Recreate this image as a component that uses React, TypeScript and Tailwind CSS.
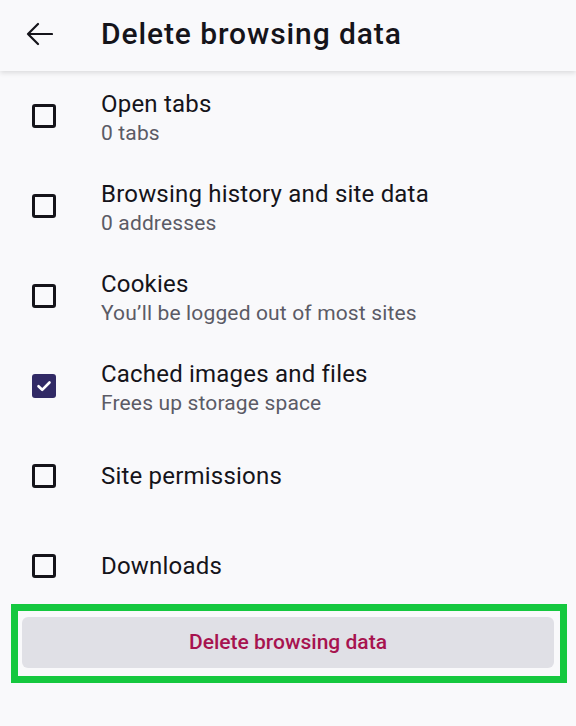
import React from "react";

const items = [
  { title: "Open tabs", sub: "0 tabs", checked: false },
  { title: "Browsing history and site data", sub: "0 addresses", checked: false },
  { title: "Cookies", sub: "You\u2019ll be logged out of most sites", checked: false },
  { title: "Cached images and files", sub: "Frees up storage space", checked: true },
  { title: "Site permissions", sub: "", checked: false },
  { title: "Downloads", sub: "", checked: false },
];

function Box({ checked }: { checked: boolean }) {
  if (checked) {
    return (
      <div className="w-[24px] h-[24px] rounded-[3px] bg-[#312a65] flex items-center justify-center">
        <svg width="18" height="18" viewBox="0 0 18 18" fill="none">
          <path d="M3.5 9.2 L7.2 12.8 L14.5 5.5" stroke="#ffffff" strokeWidth="2.6" strokeLinecap="round" strokeLinejoin="round" />
        </svg>
      </div>
    );
  }
  return <div className="w-[24px] h-[24px] rounded-[3px] border-[3px] border-[#15141a]" />;
}

export default function App() {
  return (
    <div
      className="w-[576px] h-[726px] bg-[#f9f9fb] flex flex-col overflow-hidden"
      style={{ fontFamily: "Roboto, 'Noto Sans', sans-serif" }}
    >
      <div className="h-[71px] shrink-0 flex items-center pb-[4px] bg-[#f9f9fb] shadow-[0_2px_5px_rgba(0,0,0,0.12)] relative z-10">
        <div className="w-[101px] flex items-center pl-[26px]">
          <svg width="27" height="24" viewBox="0 0 27 24" fill="none">
            <path d="M26 12 H2 M12 2 L2 12 L12 22" stroke="#15141a" strokeWidth="2.2" strokeLinecap="round" strokeLinejoin="round" />
          </svg>
        </div>
        <div className="text-[30px] tracking-[0.9px] font-medium text-[#15141a] leading-none">Delete browsing data</div>
      </div>
      <div className="flex flex-col">
        {items.map((it) => (
          <div key={it.title} className="h-[90px] flex items-center">
            <div className="w-[101px] pl-[32px] flex items-center">
              <Box checked={it.checked} />
            </div>
            <div className={it.sub ? "flex flex-col pt-[3px]" : "flex flex-col"}>
              <div className="text-[24px] tracking-[0.2px] leading-[30px] text-[#15141a]">{it.title}</div>
              {it.sub && <div className="text-[21px] tracking-[0.15px] leading-[28px] text-[#5b5b66]">{it.sub}</div>}
            </div>
          </div>
        ))}
      </div>
      <div className="relative mt-[6px] mx-[22px] h-[51px]">
        <div className="h-full rounded-[6px] bg-[#e0e0e6] flex items-center justify-center text-[21px] font-medium text-[#a7134f]">
          Delete browsing data
        </div>
        <div className="absolute left-[-11px] right-[-13px] top-[-13px] bottom-[-15px] border-[7px] border-[#15c83f] pointer-events-none" />
      </div>
    </div>
  );
}
